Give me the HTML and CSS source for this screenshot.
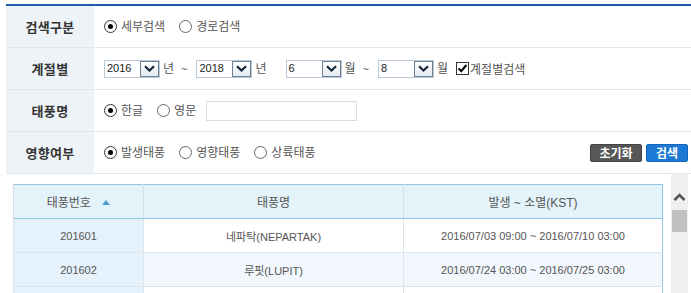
FILE: index.html
```html
<!DOCTYPE html>
<html lang="ko">
<head>
<meta charset="utf-8">
<title>태풍 검색</title>
<link rel="stylesheet" href="styles.css">
</head>
<body>
<div class="page">
  <div class="search">
    <div class="row">
      <div class="label">검색구분</div>
      <div class="field">
        <span class="opt"><span class="radio on"></span>세부검색</span>
        <span class="opt"><span class="radio"></span>경로검색</span>
      </div>
    </div>
    <div class="row">
      <div class="label">계절별</div>
      <div class="field">
        <span class="sel"><span class="sel-val">2016</span><span class="sel-btn"><svg width="11" height="7" viewBox="0 0 11 7"><path d="M1 1.2 L5.5 5.5 L10 1.2" fill="none" stroke="#14263a" stroke-width="2.2"/></svg></span></span>
        <span class="unit">년</span>
        <span class="tilde">~</span>
        <span class="sel"><span class="sel-val">2018</span><span class="sel-btn"><svg width="11" height="7" viewBox="0 0 11 7"><path d="M1 1.2 L5.5 5.5 L10 1.2" fill="none" stroke="#14263a" stroke-width="2.2"/></svg></span></span>
        <span class="unit unit-wide">년</span>
        <span class="sel"><span class="sel-val">6</span><span class="sel-btn"><svg width="11" height="7" viewBox="0 0 11 7"><path d="M1 1.2 L5.5 5.5 L10 1.2" fill="none" stroke="#14263a" stroke-width="2.2"/></svg></span></span>
        <span class="unit">월</span>
        <span class="tilde">~</span>
        <span class="sel"><span class="sel-val">8</span><span class="sel-btn"><svg width="11" height="7" viewBox="0 0 11 7"><path d="M1 1.2 L5.5 5.5 L10 1.2" fill="none" stroke="#14263a" stroke-width="2.2"/></svg></span></span>
        <span class="unit">월</span>
        <span class="check"><svg width="13" height="13" viewBox="0 0 13 13"><rect x="0.5" y="0.5" width="12" height="12" fill="#fff" stroke="#333"/><path d="M2.6 6.4 L5.2 9.2 L10.4 3" fill="none" stroke="#000" stroke-width="2"/></svg>계절별검색</span>
      </div>
    </div>
    <div class="row">
      <div class="label">태풍명</div>
      <div class="field">
        <span class="opt"><span class="radio on"></span>한글</span>
        <span class="opt"><span class="radio"></span>영문</span>
        <span class="text-input"></span>
      </div>
    </div>
    <div class="row">
      <div class="label">영향여부</div>
      <div class="field">
        <span class="opt"><span class="radio on"></span>발생태풍</span>
        <span class="opt"><span class="radio"></span>영향태풍</span>
        <span class="opt"><span class="radio"></span>상륙태풍</span>
        <span class="buttons">
          <span class="btn btn-reset">초기화</span>
          <span class="btn btn-search">검색</span>
        </span>
      </div>
    </div>
  </div>

  <div class="list">
    <div class="list-inner">
      <table class="grid">
        <colgroup><col class="c1"><col class="c2"><col class="c3"></colgroup>
        <thead>
          <tr><th>태풍번호 <span class="sort"></span></th><th>태풍명</th><th>발생 ~ 소멸(KST)</th></tr>
        </thead>
        <tbody>
          <tr><td class="num">201601</td><td>네파탁(NEPARTAK)</td><td>2016/07/03 09:00 ~ 2016/07/10 03:00</td></tr>
          <tr class="even"><td class="num">201602</td><td>루핏(LUPIT)</td><td>2016/07/24 03:00 ~ 2016/07/25 03:00</td></tr>
          <tr><td class="num"></td><td></td><td></td></tr>
        </tbody>
      </table>
    </div>
    <div class="scrollbar">
      <svg class="sb-arrow" width="13" height="8" viewBox="0 0 13 8"><path d="M1.5 7 L6.5 2 L11.5 7" fill="none" stroke="#555" stroke-width="2.6"/></svg>
      <div class="sb-thumb"></div>
    </div>
  </div>
</div>
</body>
</html>
```

FILE: styles.css
```css
html, body {
  margin: 0;
  padding: 0;
  background: #fff;
  overflow: hidden;
}
body {
  font-family: "Liberation Sans", "Noto Sans CJK KR", sans-serif;
  font-size: 11px;
  color: #555;
}
.page {
  padding: 4px 0 0 6px;
  width: 685px;
}
.search {
  border-top: 2px solid #1d5ea9;
}
.row {
  display: flex;
  height: 41px;
  border-bottom: 1px solid #e6e6e6;
}
.label {
  width: 88px;
  flex: none;
  background: #eef3f7;
  display: flex;
  align-items: center;
  justify-content: center;
  font-family: "Noto Sans CJK KR", sans-serif;
  font-weight: bold;
  font-size: 13px;
  color: #333;
  letter-spacing: 0.3px;
}
.field {
  flex: 1;
  display: flex;
  align-items: center;
  padding: 0 3px 0 10px;
  font-family: "Liberation Sans", "Noto Sans CJK KR", sans-serif;
  font-size: 12px;
  color: #555;
}
.opt {
  display: inline-flex;
  align-items: center;
  gap: 4px;
  margin-right: 14px;
  line-height: 14px;
}
.radio {
  width: 13px;
  height: 13px;
  box-sizing: border-box;
  border: 1px solid #666;
  border-radius: 50%;
  background: #fff;
  display: inline-flex;
  align-items: center;
  justify-content: center;
}
.radio.on {
  border-color: #333;
}
.radio.on::after {
  content: "";
  width: 5px;
  height: 5px;
  border-radius: 50%;
  background: #000;
}
.sel {
  display: inline-flex;
  width: 56px;
  height: 18px;
  box-sizing: border-box;
  border: 1px solid #b9cbda;
  background: #fff;
}
.sel-val {
  flex: 1;
  padding-left: 2px;
  font-size: 11px;
  line-height: 15px;
  color: #222;
}
.sel-btn {
  width: 19px;
  box-sizing: border-box;
  border: 1px solid #6f7f8f;
  background: linear-gradient(#ffffff, #e3eaf1);
  display: flex;
  align-items: center;
  justify-content: center;
}
.unit {
  margin-left: 3px;
  line-height: 14px;
}
.unit-wide {
  margin-right: 19px;
}
.tilde {
  margin: 0 9px 0 7px;
  font-size: 11px;
}
.check {
  display: inline-flex;
  align-items: center;
  gap: 1px;
  margin-left: 8px;
}
.text-input {
  display: inline-block;
  width: 151px;
  height: 20px;
  box-sizing: border-box;
  border: 1px solid #d3dee8;
  margin-left: -4px;
}
.buttons {
  margin-left: auto;
  display: flex;
  gap: 4px;
}
.btn {
  display: inline-flex;
  align-items: center;
  justify-content: center;
  height: 18px;
  border-radius: 2px;
  color: #fff;
  font-family: "Noto Sans CJK KR", sans-serif;
  font-weight: bold;
  font-size: 12px;
}
.btn-reset {
  width: 52px;
  background: #575757;
  border: 1px solid #444;
  box-sizing: border-box;
}
.btn-search {
  width: 42px;
  background: #1c79d6;
  border: 1px solid #1566b9;
  box-sizing: border-box;
}
.list {
  display: flex;
  width: 682px;
  height: 119px;
  overflow: hidden;
}
.list-inner {
  flex: 1;
  padding: 10px 8px 0 7px;
}
.grid {
  width: 650px;
  border-collapse: collapse;
  table-layout: fixed;
  border: 1px solid #8ec6e6;
  font-size: 11px;
  color: #555;
}
.c1 { width: 130px; }
.c2 { width: 260px; }
.grid th {
  height: 33px;
  background: #e4f2fa;
  font-weight: normal;
  font-size: 12px;
  border-bottom: 1px solid #8ec6e6;
  border-left: 1px solid #d2dde6;
  padding: 0;
}
.grid td {
  height: 33px;
  text-align: center;
  border-top: 1px solid #dde4ea;
  border-left: 1px solid #dde4ea;
  padding: 0;
  background: #fff;
}
.grid tr.even td {
  background: #f1f7fc;
}
.grid td.num,
.grid tr.even td.num {
  background: #e5f2fb;
}
.sort {
  display: inline-block;
  width: 0;
  height: 0;
  border-left: 4px solid transparent;
  border-right: 4px solid transparent;
  border-bottom: 5px solid #4f9fd3;
  margin-left: 8px;
  vertical-align: 2px;
}
.scrollbar {
  width: 17px;
  flex: none;
  background: #f0f0f0;
  display: flex;
  flex-direction: column;
  align-items: center;
}
.sb-arrow {
  margin-top: 19px;
}
.sb-thumb {
  width: 15px;
  height: 22px;
  background: #c1c1c1;
  margin-top: 9px;
}
```
